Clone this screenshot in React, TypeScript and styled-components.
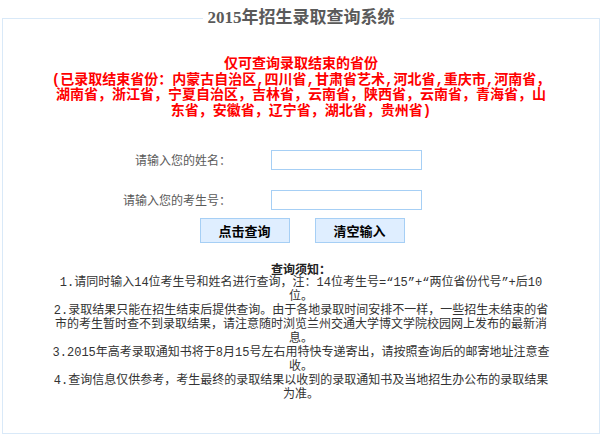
import React from "react";
import styled, { createGlobalStyle } from "styled-components";

const GlobalStyle = createGlobalStyle`
  html, body {
    margin: 0;
    padding: 0;
    background: #ffffff;
  }
  body {
    font-family: "Liberation Mono", "Noto Sans CJK SC", monospace;
    font-size: 12px;
    color: #333333;
  }
`;

const Frame = styled.fieldset`
  margin: 0 2px;
  padding: 0;
  height: 434px;
  box-sizing: border-box;
  border: 1px solid #d9e9f8;
  min-width: 0;
`;

const Title = styled.legend`
  margin: 0 auto;
  padding: 0 5px;
  font-family: "Liberation Serif", "Noto Sans CJK SC", serif;
  font-size: 17px;
  font-weight: 700;
  line-height: 36px;
  color: #5a5a5a;
`;

const Notice = styled.p`
  margin: 21px auto 0;
  width: 500px;
  text-align: center;
  white-space: nowrap;
  font-family: "Liberation Mono", "Noto Sans CJK SC", monospace;
  font-size: 14px;
  font-weight: 700;
  line-height: 15.5px;
  color: #ff0000;
`;

const FormGrid = styled.div`
  margin-top: 31px;
  display: grid;
  grid-template-columns: 228px 151px;
  column-gap: 40px;
  row-gap: 20px;
  align-items: center;
`;

const Label = styled.label`
  text-align: right;
  font-family: "Noto Sans CJK SC", sans-serif;
  font-size: 12px;
  line-height: 20px;
  color: #5a5a5a;
`;

const Field = styled.input`
  box-sizing: border-box;
  width: 151px;
  height: 20px;
  margin: 0;
  padding: 0 3px;
  border: 1px solid #a6cff5;
  background: #ffffff;
  font-size: 12px;
  outline: none;
`;

const ButtonRow = styled.div`
  margin-top: 8px;
  display: flex;
  justify-content: center;
  gap: 25px;
  padding-left: 2px;
`;

const ActionButton = styled.button`
  box-sizing: border-box;
  width: 90px;
  height: 25px;
  margin: 0;
  padding: 0;
  border: 1px solid #a6cff5;
  background: #dfeeff;
  font-family: "Noto Sans CJK SC", sans-serif;
  font-size: 13px;
  font-weight: 700;
  color: #000000;
  cursor: pointer;
`;

const Rules = styled.div`
  margin: 19px auto 0;
  width: 500px;
  text-align: center;
  white-space: nowrap;
  font-family: "Liberation Mono", "Noto Sans CJK SC", monospace;
  font-size: 12px;
  line-height: 14px;
  color: #333333;
`;

const RulesHeading = styled.div`
  font-family: "Noto Sans CJK SC", sans-serif;
  font-weight: 700;
  font-size: 12px;
  color: #222222;
`;

export default function App() {
  return (
    <>
      <GlobalStyle />
      <Frame>
        <Title>2015年招生录取查询系统</Title>
        <Notice>
          仅可查询录取结束的省份
          <br />
          (已录取结束省份：内蒙古自治区,四川省,甘肃省艺术,河北省,重庆市,河南省，
          <br />
          湖南省，浙江省，宁夏自治区，吉林省，云南省，陕西省，云南省，青海省，山
          <br />
          东省，安徽省，辽宁省，湖北省，贵州省)
        </Notice>
        <FormGrid>
          <Label htmlFor="xm">请输入您的姓名：</Label>
          <Field id="xm" type="text" />
          <Label htmlFor="ksh">请输入您的考生号：</Label>
          <Field id="ksh" type="text" />
        </FormGrid>
        <ButtonRow>
          <ActionButton type="button">点击查询</ActionButton>
          <ActionButton type="button">清空输入</ActionButton>
        </ButtonRow>
        <Rules>
          <RulesHeading>查询须知：</RulesHeading>
          1.请同时输入14位考生号和姓名进行查询，注：14位考生号=“15”+“两位省份代号”+后10
          <br />
          位。
          <br />
          2.录取结果只能在招生结束后提供查询。由于各地录取时间安排不一样，一些招生未结束的省
          <br />
          市的考生暂时查不到录取结果，请注意随时浏览兰州交通大学博文学院校园网上发布的最新消
          <br />
          息。
          <br />
          3.2015年高考录取通知书将于8月15号左右用特快专递寄出，请按照查询后的邮寄地址注意查
          <br />
          收。
          <br />
          4.查询信息仅供参考，考生最终的录取结果以收到的录取通知书及当地招生办公布的录取结果
          <br />
          为准。
        </Rules>
      </Frame>
    </>
  );
}
